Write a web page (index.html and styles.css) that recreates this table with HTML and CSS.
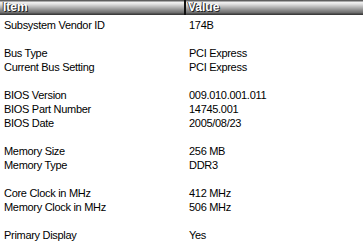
FILE: index.html
```html
<!DOCTYPE html>
<html lang="en">
<head>
    <meta charset="UTF-8">
    <title>Video Adapter</title>
    <link rel="stylesheet" href="styles.css">
</head>
<body>
    <div class="list">
        <div class="head">
            <div class="col">Item</div>
            <div class="col col-value">Value</div>
        </div>
        <div class="row"><span>Subsystem Vendor ID</span><span>174B</span></div>
        <div class="row"></div>
        <div class="row"><span>Bus Type</span><span>PCI Express</span></div>
        <div class="row"><span>Current Bus Setting</span><span>PCI Express</span></div>
        <div class="row"></div>
        <div class="row"><span>BIOS Version</span><span>009.010.001.011</span></div>
        <div class="row"><span>BIOS Part Number</span><span>14745.001</span></div>
        <div class="row"><span>BIOS Date</span><span>2005/08/23</span></div>
        <div class="row"></div>
        <div class="row"><span>Memory Size</span><span>256 MB</span></div>
        <div class="row"><span>Memory Type</span><span>DDR3</span></div>
        <div class="row"></div>
        <div class="row"><span>Core Clock in MHz</span><span>412 MHz</span></div>
        <div class="row"><span>Memory Clock in MHz</span><span>506 MHz</span></div>
        <div class="row"></div>
        <div class="row"><span>Primary Display</span><span>Yes</span></div>
    </div>
</body>
</html>
```

FILE: styles.css
```css
body {
    margin: 0;
    background: #fff;
    font-family: 'Liberation Sans', Arial, sans-serif;
    font-size: 11px;
    color: #000;
}
.list {
    width: 363px;
    height: 251px;
    overflow: hidden;
}
.head {
    display: grid;
    grid-template-columns: 184px 1fr;
    height: 15px;
    background: linear-gradient(#5e5e5e 0, #5e5e5e 1px, #f4f4f4 2px, #e2e2e2 4px, #b8b8b8 7px, #8e8e8e 10px, #6a6a6a 13px, #3c3c3c 14px);
}
.col {
    padding-left: 3px;
    line-height: 15px;
    font-size: 12px;
    font-weight: bold;
    color: #fff;
    text-shadow: 1px 1px 0 #222, -1px 0 0 #444;
}
.col-value {
    border-left: 2px solid #111;
    padding-left: 2px;
}
.row {
    display: grid;
    grid-template-columns: 185px 1fr;
    height: 14px;
    line-height: 14px;
    padding-left: 4px;
    letter-spacing: -0.3px;
}
.head + .row {
    margin-top: 3px;
}
```
